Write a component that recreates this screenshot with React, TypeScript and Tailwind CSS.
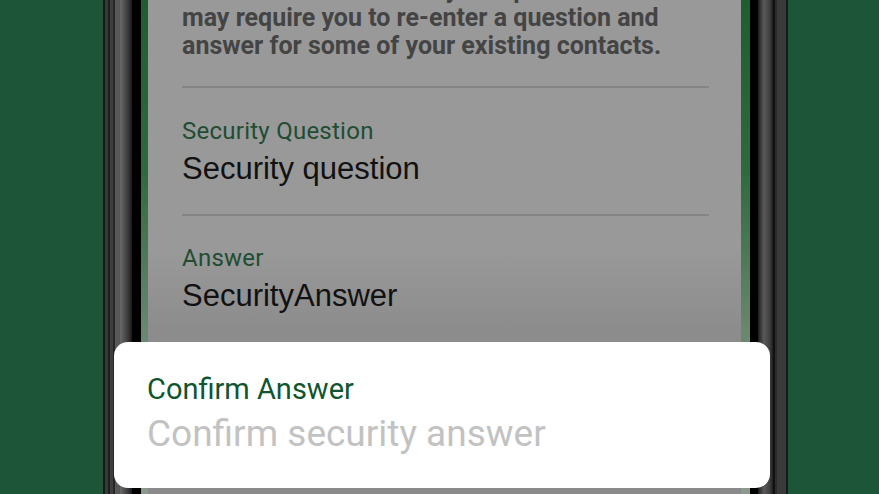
import React from "react";

const roboto = { fontFamily: "Roboto, 'Noto Sans', sans-serif" };
const arial = { fontFamily: "'Liberation Sans', Arial, sans-serif" };

export default function App() {
  return (
    <div className="relative w-[879px] h-[494px] overflow-hidden bg-[#1c5538] flex">
      <div className="w-[103px] shrink-0" />
      {/* left frame */}
      <div className="w-[38px] shrink-0 h-full bg-[linear-gradient(to_right,#181818_0px,#181818_2px,#3a3a3a_2px,#3a3a3a_5px,#1e1e1e_5px,#1e1e1e_7px,#3e3e3e_7px,#3e3e3e_10px,#262626_10px,#262626_12px,#575757_12px,#575757_17px,#6a6a6a_17px,#3a3a3a_25px,#1a1a1a_29px,#000_29px,#000_38px)]" />
      {/* screen */}
      <div className="w-[609px] shrink-0 h-full flex">
        <div className="w-[7px] h-full bg-[linear-gradient(to_bottom,#1f5d30_0%,#2f6a3f_35%,#6d8a73_70%,#8c9a8e_100%)]" />
        <div className="w-[593px] h-full pl-[34px] pr-[32px] bg-[linear-gradient(to_bottom,#999999_0px,#999999_250px,#8c8c8c_330px,#8a8a8a_494px)]">
          <div
            className="-mt-[24px] text-[25px] leading-[28px] font-bold text-[#444444] whitespace-nowrap"
            style={roboto}
          >
            <div>Please note that this key setup</div>
            <div>may require you to re-enter a question and</div>
            <div>answer for some of your existing contacts.</div>
          </div>
          <div className="mt-[26px] h-[2px] bg-[#858585]" />
          <div className="pt-[29px]">
            <div className="text-[24px] leading-[28px] tracking-[0.25px] text-[#1f4d33]" style={roboto}>
              Security Question
            </div>
            <div className="mt-[6px] text-[31px] leading-[36px] text-[#111111]" style={arial}>
              Security question
            </div>
          </div>
          <div className="mt-[27px] h-[2px] bg-[#858585]" />
          <div className="pt-[28px]">
            <div className="text-[24px] leading-[28px] tracking-[0.25px] text-[#1f4d33]" style={roboto}>
              Answer
            </div>
            <div className="mt-[6px] text-[31px] leading-[36px] text-[#111111]" style={arial}>
              SecurityAnswer
            </div>
          </div>
        </div>
        <div className="w-[9px] h-full bg-[linear-gradient(to_bottom,#1f5d30_0%,#2f6a3f_35%,#6d8a73_70%,#8c9a8e_100%)]" />
      </div>
      {/* right frame */}
      <div className="w-[38px] shrink-0 h-full bg-[linear-gradient(to_right,#000_0px,#000_8px,#1c1c1c_8px,#5a5a5a_14px,#3e3e3e_20px,#1c1c1c_23px,#111_23px,#111_25px,#2b2b2b_25px,#2b2b2b_27px,#3a3a3a_27px,#3a3a3a_36px,#1a1a1a_36px,#1a1a1a_38px)]" />
      <div className="flex-1" />

      {/* magnified card */}
      <div className="absolute left-[114px] top-[342px] w-[656px] h-[146px] bg-white rounded-[14px] pl-[33px] pt-[30px]">
        <div className="text-[29px] leading-[34px] text-[#0f5530]" style={roboto}>
          Confirm Answer
        </div>
        <div className="mt-[6px] text-[37px] leading-[44px] text-[#c2c2c2]" style={roboto}>
          Confirm security answer
        </div>
      </div>
    </div>
  );
}
